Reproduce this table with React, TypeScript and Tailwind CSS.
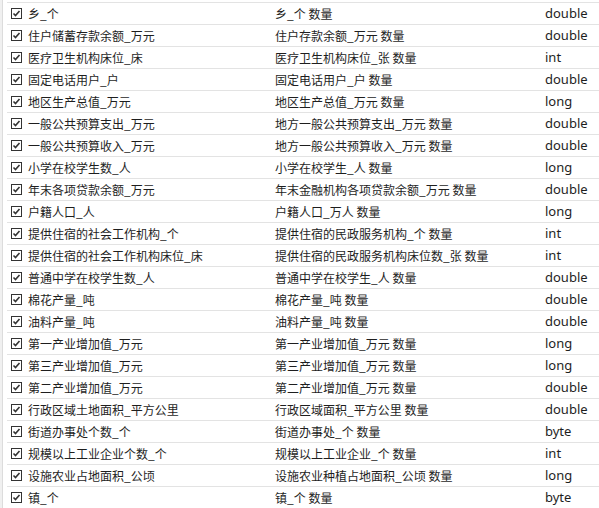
import React from 'react'

type Field = { name: string; label: string; type: string }

const FIELDS: Field[] = [
  { name: '乡_个', label: '乡_个 数量', type: 'double' },
  { name: '住户储蓄存款余额_万元', label: '住户存款余额_万元 数量', type: 'double' },
  { name: '医疗卫生机构床位_床', label: '医疗卫生机构床位_张 数量', type: 'int' },
  { name: '固定电话用户_户', label: '固定电话用户_户 数量', type: 'double' },
  { name: '地区生产总值_万元', label: '地区生产总值_万元 数量', type: 'long' },
  { name: '一般公共预算支出_万元', label: '地方一般公共预算支出_万元 数量', type: 'double' },
  { name: '一般公共预算收入_万元', label: '地方一般公共预算收入_万元 数量', type: 'double' },
  { name: '小学在校学生数_人', label: '小学在校学生_人 数量', type: 'long' },
  { name: '年末各项贷款余额_万元', label: '年末金融机构各项贷款余额_万元 数量', type: 'double' },
  { name: '户籍人口_人', label: '户籍人口_万人 数量', type: 'long' },
  { name: '提供住宿的社会工作机构_个', label: '提供住宿的民政服务机构_个 数量', type: 'int' },
  { name: '提供住宿的社会工作机构床位_床', label: '提供住宿的民政服务机构床位数_张 数量', type: 'int' },
  { name: '普通中学在校学生数_人', label: '普通中学在校学生_人 数量', type: 'double' },
  { name: '棉花产量_吨', label: '棉花产量_吨 数量', type: 'double' },
  { name: '油料产量_吨', label: '油料产量_吨 数量', type: 'double' },
  { name: '第一产业增加值_万元', label: '第一产业增加值_万元 数量', type: 'long' },
  { name: '第三产业增加值_万元', label: '第三产业增加值_万元 数量', type: 'long' },
  { name: '第二产业增加值_万元', label: '第二产业增加值_万元 数量', type: 'double' },
  { name: '行政区域土地面积_平方公里', label: '行政区域面积_平方公里 数量', type: 'double' },
  { name: '街道办事处个数_个', label: '街道办事处_个 数量', type: 'byte' },
  { name: '规模以上工业企业个数_个', label: '规模以上工业企业_个 数量', type: 'int' },
  { name: '设施农业占地面积_公顷', label: '设施农业种植占地面积_公顷 数量', type: 'long' },
  { name: '镇_个', label: '镇_个 数量', type: 'byte' },
]

const Check = () => (
  <span className="flex h-[11px] w-[11px] items-center justify-center border border-[#333] bg-white">
    <svg width="9" height="9" viewBox="0 0 9 9">
      <path d="M1.5 4.5 L3.5 6.5 L7.5 2" fill="none" stroke="#333" strokeWidth="1.6" />
    </svg>
  </span>
)

export default function App() {
  return (
    <div
      className="flex h-[508px] w-[599px] overflow-hidden bg-white text-[12px] text-[#1e1e1e]"
      style={{ fontFamily: '"Noto Sans CJK SC", "Noto Sans", sans-serif' }}
    >
      {/* left gutter strip */}
      <div className="w-[3px] bg-[#f0f0f0] border-r border-[#dcdcdc]" />
      <div className="flex flex-1 flex-col pt-[2px] pl-[4px]">
        {FIELDS.map((f) => (
          <div
            key={f.name}
            className="grid h-[22px] shrink-0 grid-cols-[268px_270px_1fr] items-center border-t border-[#e3e3e3]"
          >
            <div className="flex items-center gap-[6px] pl-[4px]">
              <Check />
              <span className="whitespace-nowrap leading-none">{f.name}</span>
            </div>
            <span className="whitespace-nowrap leading-none">{f.label}</span>
            <span
              className="whitespace-nowrap text-[13px] leading-none"
              style={{ fontFamily: '"Noto Sans", sans-serif' }}
            >
              {f.type}
            </span>
          </div>
        ))}
      </div>
    </div>
  )
}
